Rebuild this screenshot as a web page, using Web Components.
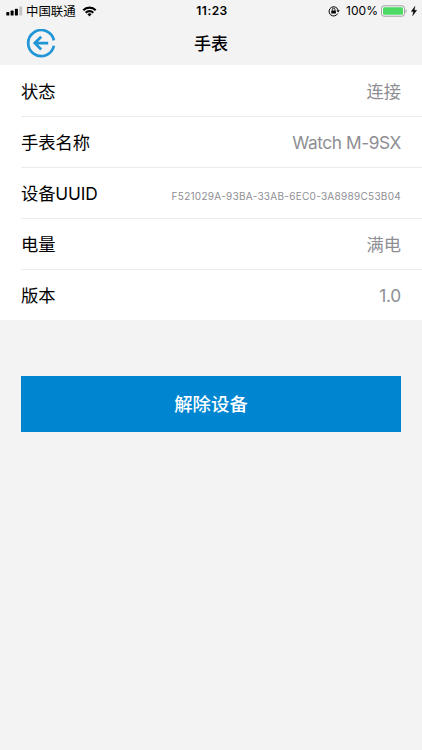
<!DOCTYPE html>
<html lang="zh-CN">
<head>
<meta charset="utf-8">
<meta name="viewport" content="width=device-width, initial-scale=1">
<title>手表</title>
<style>
    body {
        margin: 0;
        background: #f3f3f3;
        font-family: Inter, "Noto Sans CJK SC", sans-serif;
        color: #000;
    }
</style>
</head>
<body>
<watch-page></watch-page>

<script>
class StatusBar extends HTMLElement {
    constructor() {
        super();
        this.attachShadow({ mode: 'open' });
    }

    connectedCallback() {
        const carrier = this.getAttribute('carrier') || '';
        const time = this.getAttribute('time') || '';
        const battery = this.getAttribute('battery') || '';

        this.shadowRoot.innerHTML = `
            <style>
                :host {
                    display: grid;
                    grid-template-columns: 1fr auto 1fr;
                    align-items: center;
                    box-sizing: border-box;
                    height: 22px;
                    padding: 0 5px 0 6px;
                    font-size: 12px;
                    line-height: 22px;
                }
                svg {
                    display: block;
                    flex: none;
                }
                .left, .right {
                    display: flex;
                    align-items: center;
                }
                .right {
                    justify-content: flex-end;
                }
                .carrier {
                    margin: 1px 6px -1px 3px;
                    font-size: 12.4px;
                }
                .time {
                    font-weight: 600;
                    font-size: 12px;
                    letter-spacing: 0.45px;
                    padding-left: 1px;
                }
                .lock {
                    margin-right: 6px;
                }
                .percent {
                    margin-right: 3px;
                    letter-spacing: 0.05px;
                }
                .bolt {
                    margin-left: 4px;
                }
            </style>
            <div class="left">
                <svg width="17" height="10" viewBox="0 0 17 10">
                    <rect x="0.3" y="6" width="3" height="3.6" rx="0.7"/>
                    <rect x="4.6" y="4.6" width="3" height="5" rx="0.7"/>
                    <rect x="8.9" y="2.8" width="3" height="6.8" rx="0.7"/>
                    <rect x="13.2" y="0.4" width="3" height="9.2" rx="0.7" fill="#c4c4c4"/>
                </svg>
                <span class="carrier">${carrier}</span>
                <svg width="15" height="11" viewBox="0 0 14 11" fill="none" stroke="#000" stroke-width="2.1">
                    <path d="M0.8 4.2a8.8 8.8 0 0 1 12.4 0"/>
                    <path d="M3.2 6.7a5.4 5.4 0 0 1 7.6 0"/>
                    <path d="M7 10.4L4.9 8.3a3 3 0 0 1 4.2 0z" fill="#000" stroke="none"/>
                </svg>
            </div>
            <div class="time">${time}</div>
            <div class="right">
                <svg class="lock" width="12" height="12" viewBox="0 0 12 12" fill="none" stroke="#000">
                    <path d="M9.7 8.6A4.6 4.6 0 1 1 10.1 5.1" stroke-width="1"/>
                    <path d="M8.4 5.2h3.4l-1.7 2.2z" fill="#000" stroke="none"/>
                    <rect x="3.3" y="5.4" width="4.6" height="3.2" rx="0.4" fill="#000" stroke="none"/>
                    <path d="M4.3 5.6V4.5a1.3 1.3 0 0 1 2.6 0v1.1" stroke-width="0.9"/>
                </svg>
                <span class="percent">${battery}</span>
                <svg width="26" height="12" viewBox="0 0 26 12">
                    <rect x="0.5" y="0.8" width="23" height="10.4" rx="2.4" fill="#f8f8f8" stroke="#8c8c8c" stroke-width="0.8"/>
                    <rect x="2" y="2.2" width="20" height="7.6" rx="1.2" fill="#4cd964"/>
                    <path d="M24.6 4.2c1.2.5 1.2 3.1 0 3.6z" fill="#8c8c8c"/>
                </svg>
                <svg class="bolt" width="6" height="10" viewBox="0 0 6 10">
                    <path d="M4 0.3L0.2 5.6h2.3L1.6 9.8 5.8 4.2H3.3z" stroke="#000" stroke-width="0.3"/>
                </svg>
            </div>
        `;
    }
}

class NavBar extends HTMLElement {
    constructor() {
        super();
        this.attachShadow({ mode: 'open' });
    }

    connectedCallback() {
        this.shadowRoot.innerHTML = `
            <style>
                :host {
                    display: grid;
                    grid-template-columns: 1fr auto 1fr;
                    align-items: center;
                    height: 43px;
                    padding: 0 26px;
                }
                button {
                    justify-self: start;
                    padding: 0;
                    border: 0;
                    background: none;
                    cursor: pointer;
                }
                svg {
                    display: block;
                }
                .title {
                    font-size: 17px;
                    line-height: 24px;
                    font-weight: 500;
                }
            </style>
            <button aria-label="返回">
                <svg width="30" height="30" viewBox="0 0 30 30" fill="none" stroke="#2196d6" stroke-width="2.7">
                    <path d="M27.9 11.4A13 13 0 1 0 27.9 16.8"/>
                    <path d="M22.2 14.1H9.2M15.2 7.7L8.8 14.1l6.4 6.4"/>
                </svg>
            </button>
            <div class="title"><slot></slot></div>
        `;
    }
}

class InfoRow extends HTMLElement {
    constructor() {
        super();
        this.attachShadow({ mode: 'open' });
    }

    connectedCallback() {
        const label = this.getAttribute('label') || '';

        this.shadowRoot.innerHTML = `
            <style>
                :host {
                    display: flex;
                    align-items: center;
                    justify-content: space-between;
                    box-sizing: border-box;
                    height: 51px;
                    margin-left: 21px;
                    padding: 2px 21px 0 0;
                    border-bottom: 1px solid #ebebeb;
                    font-size: 17.3px;
                    line-height: 26px;
                    white-space: nowrap;
                }
                :host(:last-of-type) {
                    height: 50px;
                    border-bottom: 0;
                }
                .label {
                    letter-spacing: var(--label-spacing, 0);
                }
                .value {
                    color: #8e8e93;
                    font-size: 17.3px;
                    letter-spacing: var(--value-spacing, 0);
                }
                :host([small]) .value {
                    font-size: 10px;
                    padding-top: 4px;
                }
            </style>
            <div class="label">${label}</div>
            <div class="value"><slot></slot></div>
        `;
    }
}

class ActionButton extends HTMLElement {
    constructor() {
        super();
        this.attachShadow({ mode: 'open' });
    }

    connectedCallback() {
        this.shadowRoot.innerHTML = `
            <style>
                :host {
                    display: block;
                    margin: 56px 21px 0;
                }
                button {
                    display: block;
                    width: 100%;
                    height: 56px;
                    padding: 0;
                    border: 0;
                    background: #0086d1;
                    color: #fff;
                    font: 500 18.4px/56px Inter, "Noto Sans CJK SC", sans-serif;
                    cursor: pointer;
                }
            </style>
            <button><slot></slot></button>
        `;
    }
}

class WatchPage extends HTMLElement {
    constructor() {
        super();
        this.attachShadow({ mode: 'open' });
    }

    connectedCallback() {
        this.shadowRoot.innerHTML = `
            <style>
                :host {
                    display: block;
                    min-height: 100vh;
                }
                .list {
                    padding-top: 1px;
                    background: #fff;
                }
                .name {
                    --value-spacing: -0.4px;
                }
                .uuid {
                    --label-spacing: -0.15px;
                    --value-spacing: 0.28px;
                }
                .version {
                    --value-spacing: -0.2px;
                }
            </style>
            <status-bar carrier="中国联通" time="11:23" battery="100%"></status-bar>
            <nav-bar>手表</nav-bar>
            <div class="list">
                <info-row label="状态">连接</info-row>
                <info-row class="name" label="手表名称">Watch M-9SX</info-row>
                <info-row class="uuid" label="设备UUID" small>F521029A-93BA-33AB-6EC0-3A8989C53B04</info-row>
                <info-row label="电量">满电</info-row>
                <info-row class="version" label="版本">1.0</info-row>
            </div>
            <action-button>解除设备</action-button>
        `;
    }
}

customElements.define('status-bar', StatusBar);
customElements.define('nav-bar', NavBar);
customElements.define('info-row', InfoRow);
customElements.define('action-button', ActionButton);
customElements.define('watch-page', WatchPage);
</script>
</body>
</html>
